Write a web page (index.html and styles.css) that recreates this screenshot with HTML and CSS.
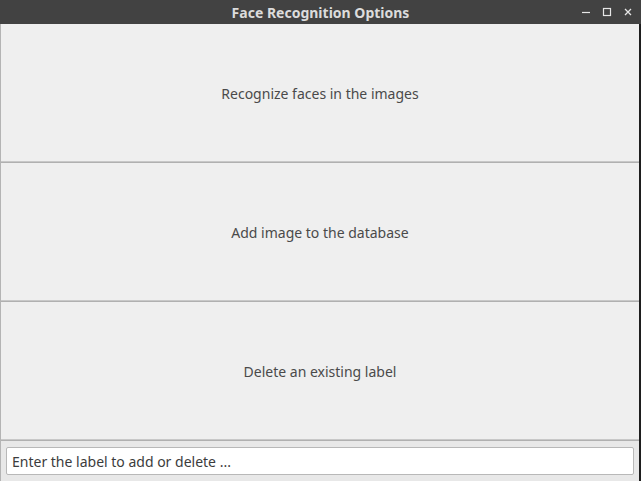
FILE: index.html
```html
<!DOCTYPE html>
<html>
<head>
<meta charset="utf-8">
<link rel="stylesheet" href="styles.css">
</head>
<body>
<div class="window">
  <div class="titlebar">
    <span class="title">Face Recognition Options</span>
    <div class="controls">
      <svg class="ctl" width="10" height="10" viewBox="0 0 10 10"><path d="M1 5.5H9" stroke="#e6e6e6" stroke-width="1.2"/></svg>
      <svg class="ctl" width="10" height="10" viewBox="0 0 10 10"><rect x="1.5" y="1.5" width="7" height="7" fill="none" stroke="#e6e6e6" stroke-width="1.2"/></svg>
      <svg class="ctl" width="10" height="10" viewBox="0 0 10 10"><path d="M2 2L8 8M8 2L2 8" stroke="#e6e6e6" stroke-width="1.3"/></svg>
    </div>
  </div>
  <div class="content">
    <button class="opt">Recognize faces in the images</button>
    <button class="opt">Add image to the database</button>
    <button class="opt">Delete an existing label</button>
    <div class="entry-row">
      <input class="entry" type="text" value="Enter the label to add or delete ...">
    </div>
  </div>
</div>
</body>
</html>
```
FILE: styles.css
```css
html, body {
  margin: 0;
  padding: 0;
  width: 641px;
  height: 481px;
  overflow: hidden;
  background: #2b2b2b;
}
.window {
  width: 641px;
  height: 481px;
  display: flex;
  flex-direction: column;
  font-family: "Noto Sans", "Open Sans", sans-serif;
}
.titlebar {
  height: 24px;
  background: #424242;
  display: flex;
  align-items: center;
  justify-content: center;
  position: relative;
  flex: none;
}
.title {
  color: #dcdcdc;
  font-weight: bold;
  font-size: 14px;
}
.controls {
  position: absolute;
  right: 8px;
  top: 7px;
  display: flex;
  gap: 11px;
}
.ctl { display: block; }
.content {
  flex: 1;
  display: flex;
  flex-direction: column;
  background: #e9e9e9;
  border-left: 1px solid #b4b4b4;
  border-right: 2px solid #1e1e1e;
  border-bottom: 1px solid #1e1e1e;
}
.opt {
  height: 139px;
  flex: none;
  margin: 0;
  padding: 0;
  border: none;
  border-bottom: 1px solid #b0b0b0;
  box-shadow: inset 0 -1px 0 #c8c8c8;
  background: #efefef;
  color: #4a4a4a;
  font-family: "Noto Sans", "Open Sans", sans-serif;
  font-size: 14px;
  text-align: center;
}
.entry-row {
  flex: 1;
  padding: 6px 5px;
  display: flex;
  background: #e8e8e8;
}
.entry {
  flex: 1;
  height: 28px;
  box-sizing: border-box;
  border: 1px solid #b8b8b8;
  border-radius: 2px;
  background: #ffffff;
  color: #3c3c3c;
  font-family: "Noto Sans", "Open Sans", sans-serif;
  font-size: 14px;
  padding: 0 5px;
  outline: none;
}
```
